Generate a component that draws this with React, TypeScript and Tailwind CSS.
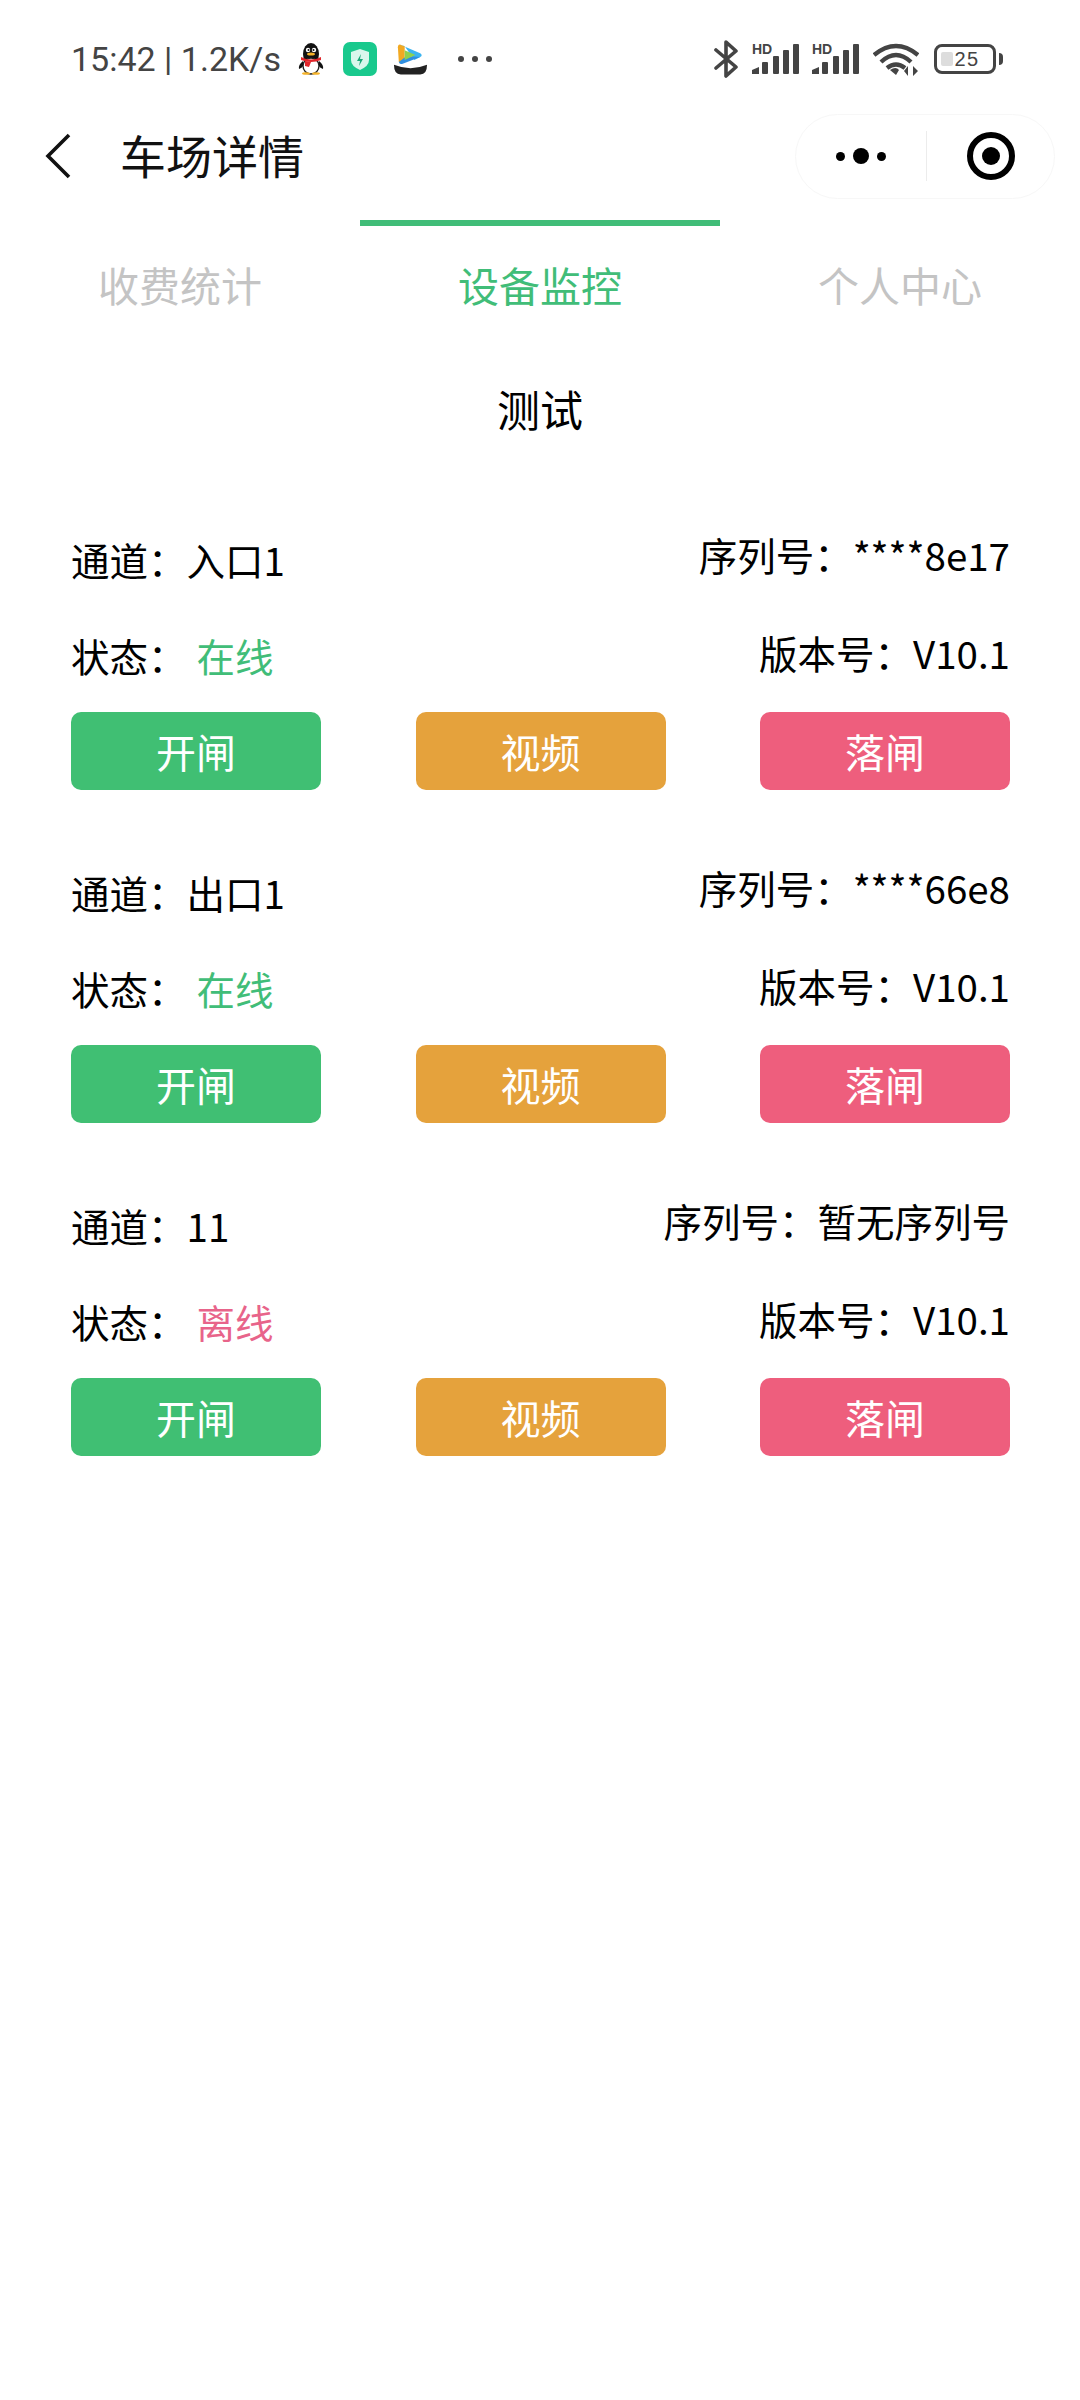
import { Fragment } from 'react';

const cjk = "font-['Noto_Sans_CJK_SC','Noto_Sans',sans-serif]";

const devices = [
  { channel: '入口1', serial: '****8e17', online: true },
  { channel: '出口1', serial: '****66e8', online: true },
  { channel: '11', serial: '暂无序列号', online: false },
];

function Penguin() {
  return (
    <svg viewBox="0 0 26 32" className="w-[26px] h-[32px]">
      <ellipse cx="13" cy="11" rx="8" ry="11" fill="#111" />
      <ellipse cx="13" cy="23" rx="8" ry="8" fill="#fff" stroke="#222" strokeWidth="1.4" />
      <circle cx="10" cy="7" r="2.2" fill="#fff" />
      <circle cx="16" cy="7" r="2.2" fill="#fff" />
      <circle cx="10.5" cy="7" r="1" fill="#111" />
      <circle cx="15.5" cy="7" r="1" fill="#111" />
      <ellipse cx="13" cy="11" rx="4" ry="1.6" fill="#f5b32a" />
      <path d="M3 14 Q13 19 23 14 L23 17 Q13 21 3 17Z" fill="#e0262b" />
      <path d="M7 18 L13 19 L11 24 L7 23Z" fill="#e0262b" />
      <path d="M5 18 Q0 22 1 26 Q4 25 5 23Z M21 18 Q26 22 25 26 Q22 25 21 23Z" fill="#111" />
      <ellipse cx="8" cy="30.5" rx="4" ry="1.3" fill="#f5b32a" />
      <ellipse cx="18" cy="30.5" rx="4" ry="1.3" fill="#f5b32a" />
    </svg>
  );
}

function ShieldApp() {
  return (
    <svg viewBox="0 0 34 34" className="w-[34px] h-[34px]">
      <rect width="34" height="34" rx="7" fill="#19c98d" />
      <path d="M17 7 L26 10 V18 Q26 24 17 28 Q8 24 8 18 V10Z" fill="#d9f7ec" />
      <path d="M18 12 L14 19 H17 L16 24 L20 17 H17Z" fill="#19a878" />
    </svg>
  );
}

function VideoApp() {
  return (
    <svg viewBox="0 0 36 32" className="w-[35px] h-[32px]">
      <path d="M7 1 Q5 1 5 4 L6 19 L12 20 L12 3Z" fill="#f2a922" />
      <path d="M7 1 L28 10 Q31 12 28 14 L22 17 L12 3Z" fill="#3cb4f0" />
      <path d="M6 19 Q7 22 10 21 L28 14 L14 13Z" fill="#2f8fe0" />
      <path d="M12 7 L23 12 L12 17Z" fill="#8fd14f" />
      <path d="M1 22 Q18 29 35 22 Q35 32 28 32 H8 Q1 32 1 22Z" fill="#222" />
    </svg>
  );
}

function Bluetooth() {
  return (
    <svg viewBox="0 0 24 38" className="w-[24px] h-[38px]">
      <path d="M2 10 L22 27 L12 36 V2 L22 11 L2 28" fill="none" stroke="#444" strokeWidth="3.6" strokeLinejoin="round" strokeLinecap="round" />
    </svg>
  );
}

function Signal() {
  return (
    <div className="relative w-[47px] h-[30px]">
      <span className="absolute left-0 top-[-2px] text-[14px] leading-[14px] font-bold text-[#444] font-['Liberation_Sans',sans-serif]">HD</span>
      <svg viewBox="0 0 47 30" className="w-[47px] h-[30px]">
        <path d="M0 30 V26 L7 23 V30Z" fill="#444" />
        <rect x="10" y="18" width="6" height="12" rx="1" fill="#444" />
        <rect x="21" y="12" width="6" height="18" rx="1" fill="#444" />
        <rect x="31" y="6" width="6" height="24" rx="1" fill="#444" />
        <rect x="41" y="0" width="6" height="30" rx="1" fill="#444" />
      </svg>
    </div>
  );
}

function Wifi() {
  return (
    <svg viewBox="0 0 46 34" className="w-[46px] h-[34px]">
      <g fill="none" stroke="#444" strokeWidth="4.4">
        <path d="M1 13 Q23 -5 45 13" />
        <path d="M8 20 Q23 6 38 20" />
        <path d="M14 26 Q23 19 32 26" />
      </g>
      <path d="M17 28 Q23 24 26 28 L23 33Z" fill="#444" />
      <path d="M35 34 V24 L31 29Z M40 24 V34 L45 29Z" fill="#444" />
    </svg>
  );
}

function Battery() {
  return (
    <div className="flex items-center">
      <div className="relative w-[62px] h-[30px] rounded-[8px] border-[3px] border-[#444] flex items-center justify-center">
        <span className="absolute left-[4px] top-[5px] bottom-[5px] w-[12px] bg-[#ddd] rounded-[2px]" />
        <span className="relative pl-1 text-[20px] leading-none tracking-[1.5px] text-[#444] font-['Liberation_Sans',sans-serif]">25</span>
      </div>
      <span className="ml-[3px] w-[4px] h-[12px] rounded-r-sm bg-[#444]" />
    </div>
  );
}

function StatusBar() {
  return (
    <div className="h-[118px] pl-[71px] pr-[77px] flex items-center justify-between">
      <div className="flex items-center">
        <span className="w-[214px] text-[34px] leading-none text-[#444] font-['Roboto',sans-serif]">15:42 | 1.2K/s</span>
        <div className="ml-[13px]"><Penguin /></div>
        <div className="ml-[19px]"><ShieldApp /></div>
        <div className="ml-[16px]"><VideoApp /></div>
        <div className="ml-[30px] flex gap-[8px]">
          <span className="w-[6px] h-[6px] rounded-full bg-[#444]" />
          <span className="w-[6px] h-[6px] rounded-full bg-[#444]" />
          <span className="w-[6px] h-[6px] rounded-full bg-[#444]" />
        </div>
      </div>
      <div className="flex items-center">
        <Bluetooth />
        <div className="ml-[14px]"><Signal /></div>
        <div className="ml-[13px]"><Signal /></div>
        <div className="ml-[14px]"><Wifi /></div>
        <div className="ml-[15px]"><Battery /></div>
      </div>
    </div>
  );
}

function NavBar() {
  return (
    <div className="h-[76px] pl-[45px] pr-[25px] flex items-center">
      <svg viewBox="0 0 26 46" className="w-[26px] h-[46px]">
        <path d="M24 2 L3 23 L24 44" fill="none" stroke="#111" strokeWidth="3.6" />
      </svg>
      <span className={`ml-[49px] mb-[4px] text-[46px] leading-none text-[#111] ${cjk}`}>车场详情</span>
      <div className="ml-auto w-[260px] h-[85px] rounded-full border border-[#f7f7f7] flex items-center">
        <div className="w-[130px] flex items-center justify-center gap-[8px]">
          <span className="w-[9px] h-[9px] rounded-full bg-black" />
          <span className="w-[16px] h-[16px] rounded-full bg-black" />
          <span className="w-[9px] h-[9px] rounded-full bg-black" />
        </div>
        <span className="w-px h-[50px] bg-[#ececec]" />
        <div className="flex-1 flex items-center justify-center">
          <span className="w-[48px] h-[48px] rounded-full border-[6px] border-black flex items-center justify-center">
            <span className="w-[18px] h-[18px] rounded-full bg-black" />
          </span>
        </div>
      </div>
    </div>
  );
}

function Tabs() {
  const tabs = ['收费统计', '设备监控', '个人中心'];
  return (
    <div className="mt-[26px] grid grid-cols-3">
      {tabs.map((t, i) => (
        <div key={t} className="flex flex-col items-center">
          <div className={`w-full h-[6px] ${i === 1 ? 'bg-[#41bd78]' : ''}`} />
          <span className={`mt-[28px] text-[41px] leading-[60px] ${cjk} ${i === 1 ? 'text-[#41bd78]' : 'text-[#c4c4c4]'}`}>{t}</span>
        </div>
      ))}
    </div>
  );
}

function DeviceCard({ channel, serial, online }: { channel: string; serial: string; online: boolean }) {
  return (
    <div className="h-[333px] pl-[71px] pr-[70px]">
      <div className="flex justify-between items-start h-[96px] text-[38.5px] leading-[56px] text-black">
        <span className={`mt-[5px] ${cjk}`}>通道：{channel}</span>
        <span className={cjk}>序列号：{serial}</span>
      </div>
      <div className="flex justify-between items-start h-[90px] text-[38.5px] leading-[56px] text-black">
        <span className={`mt-[5px] ${cjk}`}>
          状态：<span className={`ml-[10px] ${online ? 'text-[#41bd78]' : 'text-[#e8648a]'}`}>{online ? '在线' : '离线'}</span>
        </span>
        <span className={`mt-[2px] ${cjk}`}>版本号：V10.1</span>
      </div>
      <div className="flex justify-between">
        <GateBtn color="bg-[#40bf73]" label="开闸" />
        <GateBtn color="bg-[#e5a23c]" label="视频" />
        <GateBtn color="bg-[#ee5e7d]" label="落闸" />
      </div>
    </div>
  );
}

function GateBtn({ color, label }: { color: string; label: string }) {
  return (
    <div className={`w-[250px] h-[78px] rounded-[10px] ${color} flex items-center justify-center text-white text-[40px] ${cjk}`}>
      {label}
    </div>
  );
}

export default function App() {
  return (
    <div className="w-[1080px] h-[2400px] bg-white overflow-hidden">
      <StatusBar />
      <NavBar />
      <Tabs />
      <div className={`mt-[64px] text-center text-[43px] leading-[60px] text-black ${cjk}`}>测试</div>
      <div className="mt-[88px]">
        {devices.map((d) => (
          <Fragment key={d.channel}>
            <DeviceCard {...d} />
          </Fragment>
        ))}
      </div>
    </div>
  );
}
